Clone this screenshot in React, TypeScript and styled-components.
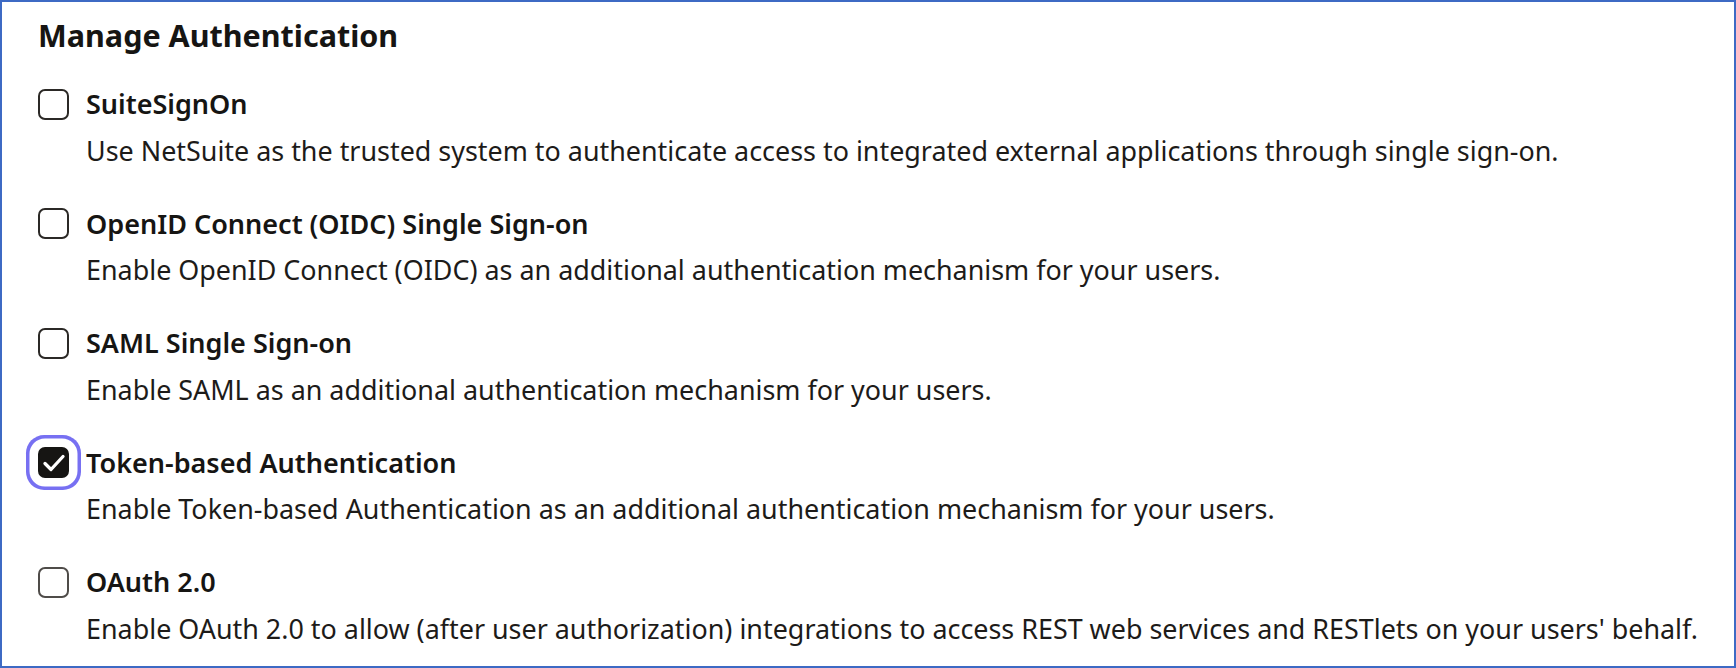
import React from "react";
import styled, { createGlobalStyle } from "styled-components";

const Global = createGlobalStyle`
  html, body { margin: 0; padding: 0; background: #ffffff; }
  body { font-family: "Noto Sans", "Open Sans", sans-serif; color: #161513; }
  * { box-sizing: border-box; }
`;

const Panel = styled.section`
  width: 1736px;
  height: 668px;
  border: 2px solid #3d6ac4;
  background: #ffffff;
  padding: 14px 0 0 36px;
  display: flex;
  flex-direction: column;
`;

const Heading = styled.h2`
  margin: 0 0 33px 0;
  font-size: 30.5px;
  line-height: 38px;
  font-weight: 700;
  color: #161513;
`;

const List = styled.div`
  display: flex;
  flex-direction: column;
  gap: 39px;
`;

const Option = styled.label`
  display: grid;
  grid-template-columns: 31px 1fr;
  column-gap: 17px;
  row-gap: 12.5px;
  align-items: center;
`;

const Box = styled.span<{ $checked?: boolean; $muted?: boolean }>`
  width: 31px;
  height: 31px;
  border-radius: 7px;
  border: 2px solid ${(p) => (p.$checked ? "#161513" : p.$muted ? "#4f4c49" : "#2b2926")};
  background: ${(p) => (p.$checked ? "#161513" : "#ffffff")};
  display: flex;
  align-items: center;
  justify-content: center;
  ${(p) => (p.$checked ? `box-shadow: 0 0 0 8.5px #ffffff, 0 0 0 12px #7770f2;` : "")}
`;

const Label = styled.span`
  font-size: 27px;
  line-height: 34px;
  font-weight: 600;
  color: #161513;
`;

const Description = styled.span`
  grid-column: 2;
  font-size: 26.9px;
  line-height: 34px;
  font-weight: 400;
  color: #1d1b19;
`;

const Check = () => (
  <svg width="26" height="26" viewBox="0 0 26 26" fill="none">
    <path d="M4 13.5 L10 19.5 L22 6.5" stroke="#ffffff" strokeWidth="3.3" strokeLinecap="round" strokeLinejoin="round" />
  </svg>
);

const options = [
  {
    label: "SuiteSignOn",
    desc: "Use NetSuite as the trusted system to authenticate access to integrated external applications through single sign-on.",
  },
  {
    label: "OpenID Connect (OIDC) Single Sign-on",
    desc: "Enable OpenID Connect (OIDC) as an additional authentication mechanism for your users.",
  },
  {
    label: "SAML Single Sign-on",
    desc: "Enable SAML as an additional authentication mechanism for your users.",
  },
  {
    label: "Token-based Authentication",
    desc: "Enable Token-based Authentication as an additional authentication mechanism for your users.",
    checked: true,
  },
  {
    label: "OAuth 2.0",
    desc: "Enable OAuth 2.0 to allow (after user authorization) integrations to access REST web services and RESTlets on your users' behalf.",
    muted: true,
  },
];

export default function App() {
  return (
    <>
      <Global />
      <Panel>
        <Heading>Manage Authentication</Heading>
        <List>
          {options.map((o) => (
            <Option key={o.label}>
              <Box $checked={o.checked} $muted={o.muted}>{o.checked && <Check />}</Box>
              <Label>{o.label}</Label>
              <Description>{o.desc}</Description>
            </Option>
          ))}
        </List>
      </Panel>
    </>
  );
}
